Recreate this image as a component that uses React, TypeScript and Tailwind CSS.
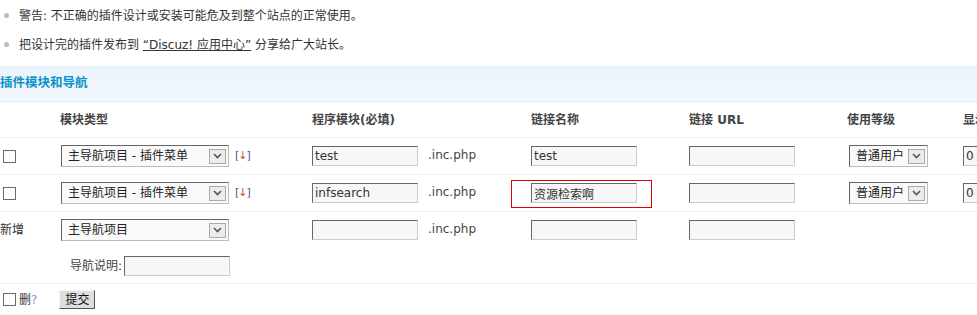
import React from "react";

const FONT = "font-['DejaVu_Sans','Noto_Sans_CJK_SC',sans-serif]";

function Check() {
  return <span className="inline-block w-[13px] h-[13px] border border-[#6b6b6b] bg-white shrink-0" />;
}

function Field({ value = "", w = "w-[106px]" }: { value?: string; w?: string }) {
  return (
    <input
      readOnly
      value={value}
      className={`${w} h-[20px] border border-t-[#666] border-l-[#666] border-r-[#ccc] border-b-[#ccc] bg-[#f7f7f7] px-[2px] text-[12px] text-[#333] outline-none ${FONT}`}
    />
  );
}

function Chevron() {
  return (
    <span className="flex items-center justify-center w-[17px] h-[15px] border border-[#aaa] bg-[#ececec] shrink-0">
      <svg width="9" height="6" viewBox="0 0 9 6">
        <polyline points="1,1 4.5,4.5 8,1" fill="none" stroke="#555" strokeWidth="1.6" />
      </svg>
    </span>
  );
}

function Select({ label, w }: { label: string; w: string }) {
  return (
    <div
      className={`${w} h-[22px] flex items-center justify-between border border-t-[#666] border-l-[#666] border-r-[#bbb] border-b-[#bbb] bg-[#fafafa] pl-[6px] pr-[2px] text-[12px] text-[#222]`}
    >
      <span className="whitespace-nowrap">{label}</span>
      <Chevron />
    </div>
  );
}

function Arrow() {
  return (
    <span className="ml-[6px] text-[11px] tracking-[-1px] whitespace-nowrap">
      <span className="text-[#4a5a8a]">[</span>
      <span className="text-[#c0503a]">↓</span>
      <span className="text-[#4a5a8a]">]</span>
    </span>
  );
}

const ROW = "grid grid-cols-[60px_252px_219px_158px_158px_116px_160px] border-b border-dotted border-[#cfe4f3]";

function DataRow({ mod, name }: { mod: string; name: string }) {
  return (
    <div className={`${ROW} h-[37px] items-center`}>
      <div className="pl-[3px] flex items-center">
        <Check />
      </div>
      <div className="pl-[1px] flex items-center">
        <Select label="主导航项目 - 插件菜单" w="w-[168px]" />
        <Arrow />
      </div>
      <div className="flex items-center">
        <Field value={mod} />
        <span className="ml-[10px] text-[12px] text-[#444] -mt-[3px]">.inc.php</span>
      </div>
      <div className="flex items-center">
        <Field value={name} />
      </div>
      <div className="flex items-center">
        <Field />
      </div>
      <div className="pl-[2px] flex items-center">
        <Select label="普通用户" w="w-[79px]" />
      </div>
      <div className="flex items-center">
        <Field value="0" w="w-[60px]" />
      </div>
    </div>
  );
}

export default function App() {
  return (
    <div className={`relative w-[977px] h-[315px] overflow-hidden bg-white text-[12px] text-[#333] ${FONT}`}>
      <ul className="pt-[1px]">
        <li className="h-[29px] flex items-center">
          <span className="ml-[4px] mr-[10px] w-[5px] h-[5px] rounded-full bg-[#bbb]" />
          <span>警告: 不正确的插件设计或安装可能危及到整个站点的正常使用。</span>
        </li>
        <li className="h-[29px] flex items-center">
          <span className="ml-[4px] mr-[10px] w-[5px] h-[5px] rounded-full bg-[#bbb]" />
          <span>
            把设计完的插件发布到 <span className="underline">“Discuz! 应用中心”</span> 分享给广大站长。
          </span>
        </li>
      </ul>

      <div className="mt-[7px] h-[36px] flex items-center bg-linear-to-b from-[#ebf3fc] to-[#f3f8fd] border-b border-dotted border-[#cfe4f3]">
        <span className="font-bold text-[#0b93c9] text-[12.5px]">插件模块和导航</span>
      </div>

      <div className={`${ROW} h-[36px] items-center font-bold text-[#444]`}>
        <div />
        <div>模块类型</div>
        <div>程序模块(必填)</div>
        <div>链接名称</div>
        <div>链接 URL</div>
        <div>使用等级</div>
        <div className="whitespace-nowrap">显示顺序</div>
      </div>

      <DataRow mod="test" name="test" />
      <DataRow mod="infsearch" name="资源检索啊" />

      <div className="border-b border-dotted border-[#cfe4f3]">
        <div className="grid grid-cols-[60px_252px_219px_158px_158px_116px_160px] h-[36px] items-center">
          <div>新增</div>
          <div className="pl-[1px]">
            <Select label="主导航项目" w="w-[168px]" />
          </div>
          <div className="flex items-center">
            <Field />
            <span className="ml-[10px] text-[12px] text-[#444] -mt-[3px]">.inc.php</span>
          </div>
          <div>
            <Field />
          </div>
          <div>
            <Field />
          </div>
          <div />
          <div />
        </div>
        <div className="h-[35px] flex items-center pl-[70px]">
          <span className="text-[#444] mr-[2px]">导航说明:</span>
          <Field />
        </div>
      </div>

      <div className="h-[31px] flex items-center">
        <span className="ml-[3px] flex items-center">
          <Check />
        </span>
        <span className="ml-[3px]">删</span>
        <span className="text-[#7a9cc6]">?</span>
        <button className="ml-[22px] w-[36px] h-[19px] flex items-center justify-center bg-[#dedede] border border-t-[#f5f5f5] border-l-[#f5f5f5] border-r-[#555] border-b-[#555] text-[12px] text-[#111]">
          提交
        </button>
      </div>

      <div className="absolute left-[511px] top-[180px] w-[141px] h-[28px] border border-[#e00000]" />
    </div>
  );
}
